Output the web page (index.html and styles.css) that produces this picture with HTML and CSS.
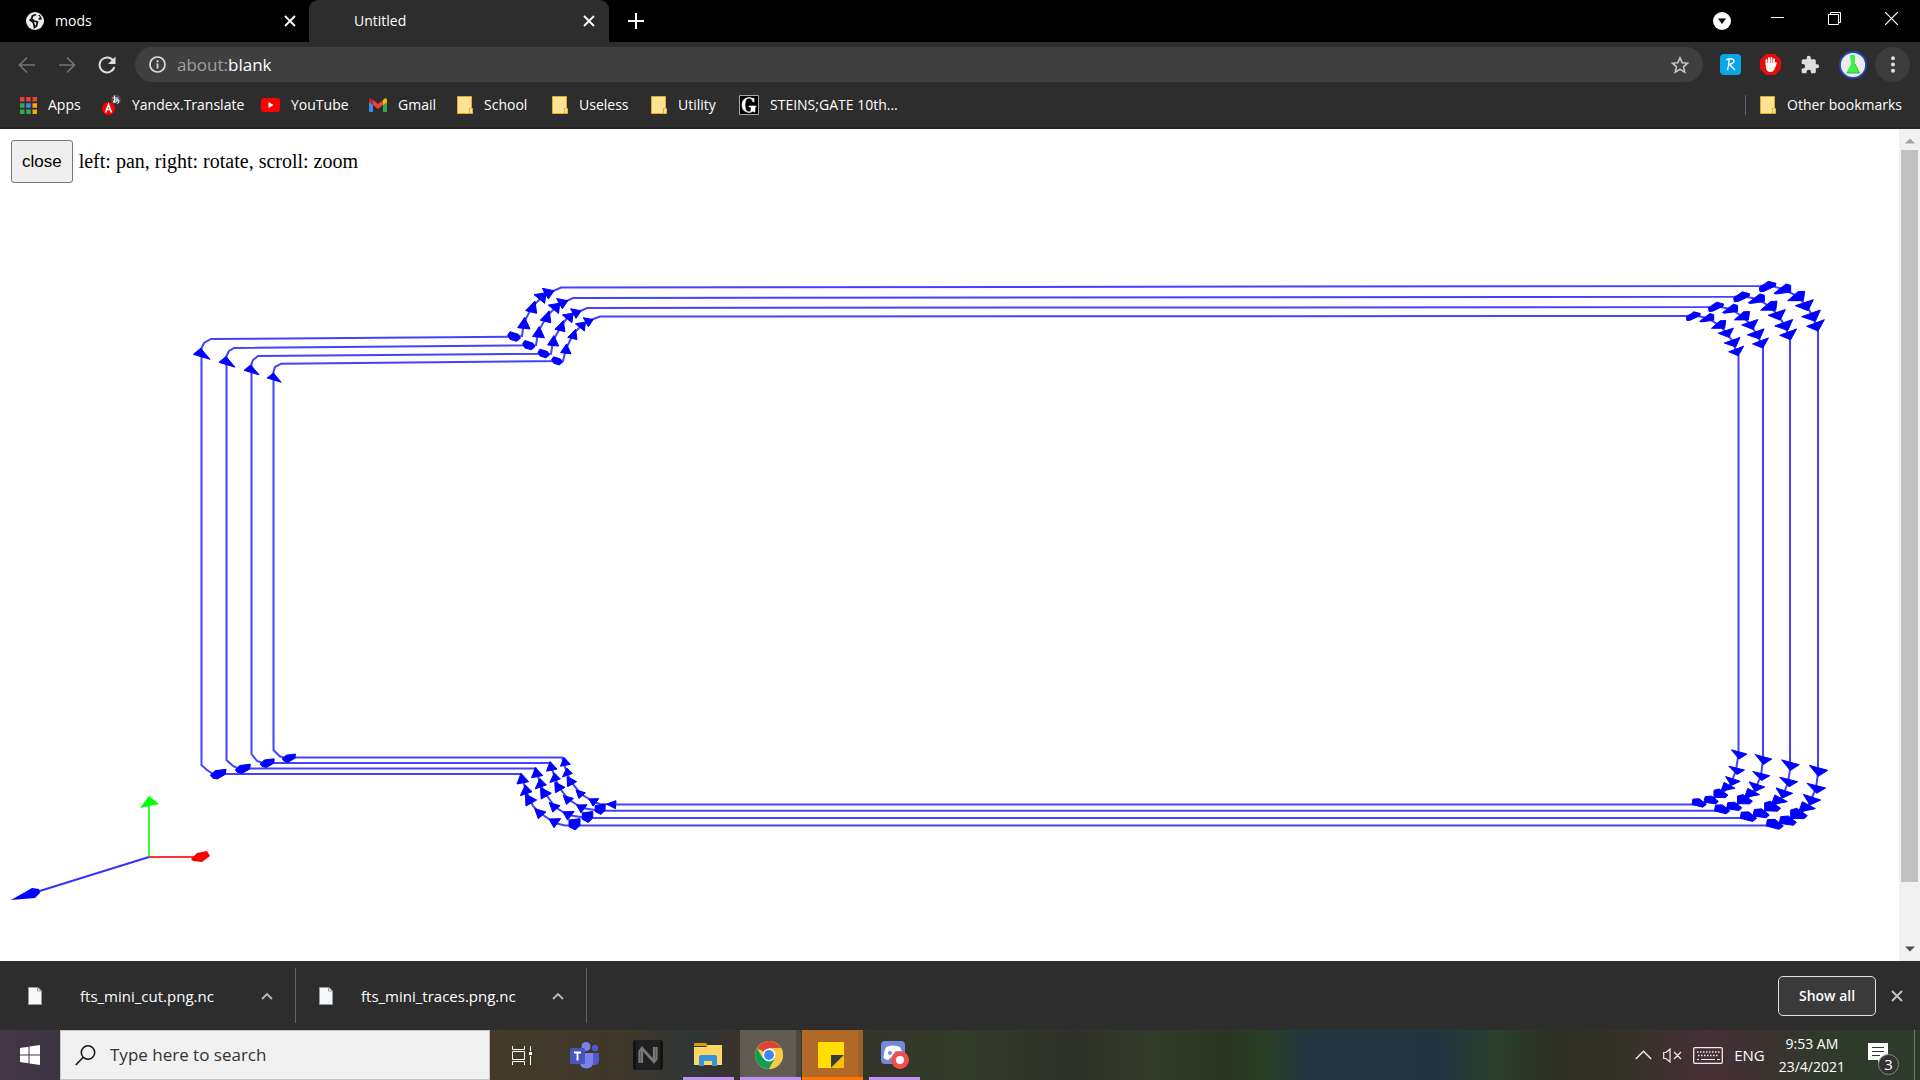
FILE: index.html
```html
<!DOCTYPE html>
<html lang="en">
<head>
<meta charset="utf-8">
<title>Untitled</title>
<link rel="stylesheet" href="styles.css">
</head>
<body>
<header class="browser">
  <div class="tabstrip">
    <div class="tab">
      <svg class="tab-icon" width="18" height="18" viewBox="0 0 18 18"><circle cx="9" cy="9" r="9" fill="#eee"/><path d="M10 2.500L6.500 4l-1 3 2.500 2 3.500 1-1 4-2 1.500-.5-3-1-2.500-3.500-2.500" fill="none" stroke="#111" stroke-width="1.800"/><path d="M12 3l2 2-2 2 2 1 2-1-2-4z" fill="#111"/></svg>
      <span class="tab-title">mods</span>
      <button class="icon-btn" aria-label="Close tab"><svg width="12" height="12" viewBox="0 0 12 12"><path d="M1 1l10 10M11 1L1 11" stroke="#fff" stroke-width="1.800"/></svg></button>
    </div>
    <div class="tab active">
      <span class="tab-title">Untitled</span>
      <button class="icon-btn" aria-label="Close tab"><svg width="12" height="12" viewBox="0 0 12 12"><path d="M1 1l10 10M11 1L1 11" stroke="#fff" stroke-width="1.800"/></svg></button>
    </div>
    <button class="icon-btn new-tab" aria-label="New tab"><svg width="16" height="16" viewBox="0 0 16 16"><path d="M8 0v16M0 8h16" stroke="#fff" stroke-width="2"/></svg></button>
    <div class="window-controls">
      <button class="icon-btn" aria-label="Search tabs"><svg class="lower" width="18" height="18" viewBox="0 0 18 18"><circle cx="9" cy="9" r="9" fill="#fff"/><path d="M5 6.500h8L9 12z" fill="#000"/></svg></button>
      <button class="icon-btn" aria-label="Minimize"><svg width="13" height="13" viewBox="0 0 13 13"><path d="M0 5.500h13" stroke="#fff"/></svg></button>
      <button class="icon-btn" aria-label="Restore"><svg width="13" height="13" viewBox="0 0 13 13"><path d="M.5 2.500h10v10H.5zM2.500 2V.5h10v10h-2" fill="none" stroke="#fff"/></svg></button>
      <button class="icon-btn" aria-label="Close"><svg width="13" height="13" viewBox="0 0 13 13"><path d="M0 0l13 13M13 0L0 13" stroke="#fff" stroke-width="1.200"/></svg></button>
    </div>
  </div>
  <div class="toolbar">
    <div class="nav">
      <button class="icon-btn" aria-label="Back"><svg width="18" height="18" viewBox="0 0 18 18"><path d="M17 9H2M9 1.500L1.500 9 9 16.500" fill="none" stroke="#747474" stroke-width="1.700"/></svg></button>
      <button class="icon-btn" aria-label="Forward"><svg width="18" height="18" viewBox="0 0 18 18"><path d="M1 9h15M9 1.500L16.500 9 9 16.500" fill="none" stroke="#747474" stroke-width="1.700"/></svg></button>
      <button class="icon-btn" aria-label="Reload"><svg width="18" height="18" viewBox="0 0 18 18"><path d="M15.500 5A7.500 7.500 0 1 0 16.300 11" fill="none" stroke="#dedede" stroke-width="2"/><path d="M17.500.5v7.500H10z" fill="#dedede"/></svg></button>
    </div>
    <div class="omnibox">
      <svg width="17" height="17" viewBox="0 0 17 17"><circle cx="8.500" cy="8.500" r="7.500" fill="none" stroke="#dedede" stroke-width="1.700"/><path d="M8.500 7.500v5M8.500 4.200v2" stroke="#dedede" stroke-width="1.800"/></svg>
      <span class="url"><span class="scheme">about:</span>blank</span>
      <button class="icon-btn star" aria-label="Bookmark this tab"><svg width="18" height="18" viewBox="0 0 18 18"><path d="M9 1.800l2.200 4.900 5.300.5-4 3.600 1.200 5.300L9 13.300l-4.700 2.800 1.200-5.300-4-3.600 5.300-.5z" fill="none" stroke="#c4c4c4" stroke-width="1.600"/></svg></button>
    </div>
    <div class="extensions">
      <button class="icon-btn" aria-label="Raindrop"><svg width="21" height="21" viewBox="0 0 21 21"><rect width="21" height="21" rx="4" fill="#0aa5e8"/><path d="M6 6c4-2 8-1.500 8 1s-4 3.500-5.500 3.500c2 .5 4 3 6.500 5.500M9 5.500c0 4-.5 7-1.500 10.500" fill="none" stroke="#fff" stroke-width="1.300"/></svg></button>
      <button class="icon-btn" aria-label="Ad blocker"><svg width="21" height="21" viewBox="0 0 21 21"><path d="M6 0h9l6 6v9l-6 6H6l-6-6V6z" fill="#e60c0c"/><path d="M6.500 10V6M9 9V4M11.500 9V4M14 10V5.500" stroke="#fff" stroke-width="1.900" stroke-linecap="round"/><path d="M5.600 9h9.300l1-1 1 1-2.500 6.500Q13 18 10 18t-4-4z" fill="#fff"/></svg></button>
      <button class="icon-btn" aria-label="Extensions"><svg width="20" height="20" viewBox="0 0 24 24"><path fill="#dedede" d="M20.500 11H19V7c0-1.100-.9-2-2-2h-4V3.500a2.500 2.500 0 0 0-5 0V5H4c-1.100 0-2 .9-2 2v3.800h1.500a2.700 2.700 0 0 1 0 5.400H2V20c0 1.100.9 2 2 2h3.800v-1.500a2.700 2.700 0 0 1 5.400 0V22H17c1.100 0 2-.9 2-2v-4h1.500a2.500 2.500 0 0 0 0-5z"/></svg></button>
      <button class="icon-btn" aria-label="Profile"><svg width="28" height="28" viewBox="0 0 28 28"><circle cx="14" cy="14" r="13" fill="#ececec" stroke="#2747c4" stroke-width="1.800"/><path d="M11 4h5v9l4.500 9h-13L12 13z" fill="#3df04a"/><path d="M16 13l4.500 9h-13" fill="none" stroke="#25c93a"/></svg></button>
      <button class="icon-btn menu" aria-label="Menu"><svg width="4" height="17" viewBox="0 0 4 17"><g fill="#dedede"><circle cx="2" cy="2.200" r="2"/><circle cx="2" cy="8.500" r="2"/><circle cx="2" cy="14.800" r="2"/></g></svg></button>
    </div>
  </div>
  <nav class="bookmarks" aria-label="Bookmarks">
    <a href="#"><svg width="17" height="17" viewBox="0 0 17 17"><path d="M0 0h4.500v4.500H0zM6.200 0h4.500v4.500H6.200zM12.500 0H17v4.500h-4.500z" fill="#ea4335"/><path d="M0 6.200h4.500v4.500H0zM0 12.500h4.500V17H0zM6.200 12.500h4.500V17H6.200z" fill="#34a853"/><path d="M6.200 6.200h4.500v4.500H6.200z" fill="#4285f4"/><path d="M12.500 6.200H17v4.500h-4.500zM12.500 12.500H17V17h-4.500z" fill="#fbab05"/></svg><span class="w-apps">Apps</span></a>
    <a href="#"><svg width="19" height="23" viewBox="0 0 19 23"><circle cx="14" cy="5.500" r="5" fill="#444"/><path d="M10.500 4h6M12.500 1.500v7M15.500 5.500q-4 0-4 2.500 3 1 4-2.500 3 1 0 4" fill="none" stroke="#eee" stroke-width="1.100"/><circle cx="6.500" cy="14.500" r="6.500" fill="#f00"/><path d="M3.500 18.500l3-8 3 8M4.500 15.500h4" fill="none" stroke="#fff" stroke-width="1.500"/></svg><span class="w-yandex">Yandex.Translate</span></a>
    <a href="#"><svg width="19" height="14" viewBox="0 0 19 14"><rect width="19" height="14" rx="3" fill="#f00"/><path d="M7.500 4l5 3-5 3z" fill="#fff"/></svg><span class="w-youtube">YouTube</span></a>
    <a href="#"><svg width="18" height="14" viewBox="0 0 18 14"><path d="M0 2v11q0 1 1 1h3V5z" fill="#4285f4"/><path d="M18 2v11q0 1-1 1h-3V5z" fill="#34a853"/><path d="M0 2q0-2 2-1.800L4 2v5L0 4z" fill="#c5221f"/><path d="M18 2q0-2-2-1.800L14 2v5l4-3z" fill="#fbbc04"/><path d="M4 2l5 4 5-4v5l-5 4-5-4z" fill="#ea4335"/></svg><span class="w-gmail">Gmail</span></a>
    <a href="#"><svg width="16" height="18" viewBox="0 0 16 18"><path d="M.5.5h14v11l1 1v5H.5z" fill="#ffe394" stroke="#d8ae35"/><path d="M12.500 17.500v-5h2" fill="none" stroke="#d8ae35"/></svg><span class="w-school">School</span></a>
    <a href="#"><svg width="16" height="18" viewBox="0 0 16 18"><path d="M.5.5h14v11l1 1v5H.5z" fill="#ffe394" stroke="#d8ae35"/><path d="M12.500 17.500v-5h2" fill="none" stroke="#d8ae35"/></svg><span class="w-useless">Useless</span></a>
    <a href="#"><svg width="16" height="18" viewBox="0 0 16 18"><path d="M.5.5h14v11l1 1v5H.5z" fill="#ffe394" stroke="#d8ae35"/><path d="M12.500 17.500v-5h2" fill="none" stroke="#d8ae35"/></svg><span class="w-utility">Utility</span></a>
    <a href="#"><svg width="20" height="20" viewBox="0 0 20 20"><path d="M.5.5h19v19H.5z" fill="#000" stroke="#aaa"/><path d="M15 3v4h-1q-1-4-4-4-4 0-4 7t4 7q2 0 2-2v-3h-2v-1h7v1h-1v5h-1l-1-1q-2 1.500-4 1.500-7-.5-7-7.500T10 2.500q2 0 4 1z" fill="#fff" stroke="#fff" stroke-width=".6"/></svg><span>STEINS;GATE 10th...</span></a>
    <a class="other" href="#"><svg width="16" height="18" viewBox="0 0 16 18"><path d="M.5.5h14v11l1 1v5H.5z" fill="#ffe394" stroke="#d8ae35"/><path d="M12.500 17.500v-5h2" fill="none" stroke="#d8ae35"/></svg><span>Other bookmarks</span></a>
  </nav>
</header>

<main class="page">
  <div class="view">
    <div class="hint"><button class="close-btn">close</button><span>left: pan, right: rotate, scroll: zoom</span></div>
    <svg class="toolpath" viewBox="0 129 1899 832" preserveAspectRatio="xMidYMid meet" role="img" aria-label="Toolpath">
      <g fill="none" stroke="#00f" stroke-opacity=".74" stroke-width="2">
        <path d="M201.500 765V348L204 343L211 339L514 336.700L522 336L523.700 323L532 307L541 298L549 293L561 287.500L1760 286L1768 285L1783 289L1797 296L1806 305L1812 315L1816 325L1818 331V766L1818 773L1816 788L1811 800L1807 808L1799 814L1788 821L1775 825.500H574L565 825.500L555 823L540 813L533 806L526 791L521 774H213L207 770Z"/>
        <path d="M226.500 760V356L229 351L234 348L536 345.300L538 332L547 316L555 308L562 303L573 298L1734 296.700L1742 296L1757 299L1769 306L1777 314L1784 324L1788 334L1790 340V770L1788 782L1784 793L1779 801L1772 807L1761 813L1749 818H587L568 815L555 807L545 793L540 784L536 768.500H238L233 766Z"/>
        <path d="M251.500 754V364L253 360L258 356L551 353.700L553 341L561 326L568 317L576 313L587 308L1710 307L1716 306L1730 309L1742 316L1750 324L1756 333L1761 343L1763 348V759L1761 776L1756 787L1752 794L1745 800L1734 806L1722 810.700H600L582 808L568 799L559 787L555 778L550 763H263L257 761Z"/>
        <path d="M273.500 750V372L275 367L281 363.700L563 361L566 349L573 334L581 326L588 321L600 316.500L1687 316L1693 315L1707 318L1719 325L1726 332L1733 342L1736 351L1738.500 356V754L1736 770L1732 781L1728 788L1721 794L1711 800L1699 804.500H612L600 804L594 802L581 794L571 782L567 773L562 757.500H284L280 756.500Z"/>
      </g>
      <g id="heads" fill="#00f" stroke="#00f" stroke-width="1"></g>
      <g fill="none" stroke-width="2" stroke-opacity=".8"><path d="M149 857L30 894" stroke="#00f"/><path d="M149 857V800" stroke="#0f0"/><path d="M149 857H196" stroke="#f00"/></g>
      <path d="M11 900L32 888L39 889L40 893L35 898Z" fill="#00f"/>
      <path d="M140 808L149 796L159 804Z" fill="#0f0"/>
      <path d="M191 859L197 853L207 851L210 856L202 862L193 861Z" fill="#f00"/>
    </svg>
  </div>
  <div class="scrollbar">
    <svg width="10" height="6" viewBox="0 0 10 6"><path d="M0 5.500h10L5 .5z" fill="#a3a3a3"/></svg>
    <div class="thumb"></div>
    <svg width="10" height="6" viewBox="0 0 10 6"><path d="M0 .5h10L5 5.500z" fill="#505050"/></svg>
  </div>
</main>

<section class="downloads" aria-label="Downloads">
  <div class="download">
    <svg width="14" height="18" viewBox="0 0 14 18"><path d="M.5.500h9.500l3.500 3.500v13.500H.5z" fill="#f6f9fb" stroke="#999"/><path d="M9.500.5V4h4" fill="none" stroke="#999"/></svg>
    <span class="file">fts_mini_cut.png.nc</span>
    <button class="icon-btn" aria-label="More options"><svg width="12" height="8" viewBox="0 0 12 8"><path d="M1 7l5-5 5 5" fill="none" stroke="#bbb" stroke-width="1.800"/></svg></button>
  </div>
  <div class="download">
    <svg width="14" height="18" viewBox="0 0 14 18"><path d="M.5.500h9.500l3.500 3.500v13.500H.5z" fill="#f6f9fb" stroke="#999"/><path d="M9.500.5V4h4" fill="none" stroke="#999"/></svg>
    <span class="file">fts_mini_traces.png.nc</span>
    <button class="icon-btn" aria-label="More options"><svg width="12" height="8" viewBox="0 0 12 8"><path d="M1 7l5-5 5 5" fill="none" stroke="#bbb" stroke-width="1.800"/></svg></button>
  </div>
  <button class="show-all">Show all</button>
  <button class="icon-btn" aria-label="Close downloads"><svg width="12" height="12" viewBox="0 0 12 12"><path d="M1 1l10 10M11 1L1 11" stroke="#c4c4c4" stroke-width="1.900"/></svg></button>
</section>

<footer class="taskbar">
  <button class="icon-btn start" aria-label="Start"><svg width="20" height="20" viewBox="0 0 20 20"><path d="M0 3l8.500-1.300v7.800H0zM9.500 1.500L20 0v9.500H9.500zM0 10.500h8.500v7.800L0 17zM9.500 10.500H20V20L9.500 18.500z" fill="#fff"/></svg></button>
  <label class="search">
    <svg width="21" height="21" viewBox="0 0 21 21"><circle cx="13" cy="7.500" r="6.700" fill="none" stroke="#111" stroke-width="1.500"/><path d="M8.200 12.200L.8 20" stroke="#111" stroke-width="1.500"/></svg>
    <input type="text" placeholder="Type here to search" aria-label="Type here to search">
  </label>
  <button class="app" aria-label="Task View"><svg width="20" height="19" viewBox="0 0 20 19"><path d="M.5 0v3.500h12V0M.5 19v-3.500h12V19M.5 5.500h12v8H.5zM18.500 0v5M18.500 10v9" fill="none" stroke="#fff"/><path d="M17 6h3v3h-3z" fill="#fff"/></svg></button>
  <button class="app" aria-label="Teams"><svg width="29" height="27" viewBox="0 0 29 27"><circle cx="25" cy="6" r="3.200" fill="#5059c9"/><path d="M20 11h9v8q0 4-5 4h-4z" fill="#5059c9"/><circle cx="16" cy="4.500" r="4.500" fill="#7b83eb"/><path d="M10 11h13v9q0 6.500-6.500 6.500T10 20z" fill="#7b83eb"/><rect y="6" width="15" height="16" rx="1.500" fill="#4b53bc"/><path d="M4 10.500h7M7.500 10.500v8" stroke="#fff" stroke-width="1.900"/></svg></button>
  <button class="app" aria-label="NZXT"><svg width="30" height="30" viewBox="0 0 30 30"><rect width="30" height="30" rx="3" fill="#111"/><rect x="3" width="24" height="30" fill="#1f1f1f"/><path d="M6.500 23V11L9 8l12 13V7M23.500 7v12L21 22 9 9v14" fill="none" stroke="#777" stroke-width="2.200"/></svg></button>
  <button class="app open stacked" aria-label="File Explorer"><svg width="28" height="24" viewBox="0 0 28 24"><path d="M0 1q0-1 1-1h11l2 3H0z" fill="#e09b0c"/><path d="M0 4h12l2-2h14v20H0z" fill="#ffd766"/><path d="M5 23V14q0-2 2-2h14q2 0 2 2v9h-5v-5h-8v5z" fill="#3793dd"/></svg></button>
  <button class="app open stacked current" aria-label="Chrome"><svg width="28" height="28" viewBox="0 0 28 28"><circle cx="14" cy="14" r="14" fill="#fcca3f"/><path d="M14 14L1.900 7A14 14 0 0 1 26.100 7H14z" fill="#db4437"/><path d="M1.900 7A14 14 0 0 0 14 28l6-10.500L14 14l-6 3.500z" fill="#0f9d58"/><path d="M20 17.500L14 28A14 14 0 0 0 26.100 7H14z" fill="#fcca3f"/><circle cx="14" cy="14" r="6.500" fill="#fff"/><circle cx="14" cy="14" r="5" fill="#4285f4"/></svg></button>
  <button class="app open stacked alert" aria-label="Sticky Notes"><svg width="26" height="26" viewBox="0 0 26 26"><path d="M1 0h24q1 0 1 1v12L13 26H1q-1 0-1-1V1q0-1 1-1z" fill="#ffde00"/><path d="M13 26V13h13z" fill="#3b3a39"/><path d="M13 26L26 13v12q0 1-1 1z" fill="#f5c400"/></svg></button>
  <button class="app open" aria-label="Discord"><svg width="28" height="28" viewBox="0 0 28 28"><rect width="24" height="23" rx="4" fill="#7289da"/><path d="M5 6q7-3 14 0 3 5 2.500 11-3 2-5 2l-1-2h-7l-1 2q-2.500 0-5-2Q2.500 11 5 6z" fill="#fff"/><circle cx="9" cy="12" r="2" fill="#7289da"/><circle cx="15.500" cy="12" r="2" fill="#7289da"/><circle cx="19" cy="19" r="9" fill="#f04f50"/><circle cx="19" cy="19" r="4" fill="#fff"/></svg></button>
  <div class="tray">
    <svg width="17" height="10" viewBox="0 0 17 10"><path d="M.8 9l7.700-7.700L16.200 9" fill="none" stroke="#eee" stroke-width="1.400"/></svg>
    <svg width="19" height="15" viewBox="0 0 19 15"><path d="M.7 4.500H3L7 1v13l-4-3.500H.7zM11 4l7 7M18 4l-7 7" fill="none" stroke="#eee" stroke-width="1.200"/></svg>
    <svg width="30" height="17" viewBox="0 0 30 17"><rect x=".7" y=".7" width="28.600" height="15.600" rx="1" fill="none" stroke="#eee" stroke-width="1.300"/><path d="M4 5h23M5 8.500h21" stroke="#eee" stroke-width="1.400" stroke-dasharray="1.500 1.500"/><path d="M4 12.500h2M8 12.500h14M24 12.500h3" stroke="#eee"/></svg>
    <span>ENG</span>
    <div class="clock"><span>9:53 AM</span><span>23/4/2021</span></div>
    <div class="notify"><svg width="20" height="20" viewBox="0 0 20 20"><path d="M0 0h20v17h-6l-4 3v-3H0z" fill="#fff"/><path d="M4 4.500h12M4 8.500h12M4 12.500h8" stroke="#333" stroke-width="1.200"/></svg><span class="badge">3</span></div>
  </div>
</footer>
<script src="heads.js"></script>
</body>
</html>
```

FILE: styles.css
```css
* { box-sizing: border-box; }
body {
  margin: 0;
  min-height: 100vh;
  display: flex;
  flex-direction: column;
  font: 14px/20px "Open Sans", "Noto Sans", sans-serif;
  color: #fff;
  background: #fff;
}
svg { display: block; flex: none; }
button { font: inherit; color: inherit; }
.icon-btn {
  display: flex;
  align-items: center;
  justify-content: center;
  padding: 0;
  border: 0;
  background: none;
}

.browser { background: #2d2d2d; border-bottom: 2px solid #232323; }
.tabstrip { display: flex; height: 42px; background: #000; }
.tab { display: flex; align-items: center; width: 309px; padding: 0 13px 0 26px; }
.tab-icon { margin-right: 11px; }
.tab-title { flex: 1; }
.tab.active { width: 300px; padding: 0 14px 0 45px; background: #2d2d2d; border-radius: 9px 9px 0 0; }
.new-tab { margin-left: 19px; }
.window-controls { display: flex; align-items: center; margin-left: auto; padding-bottom: 5px; }
.window-controls .icon-btn { width: 57px; }
.window-controls .icon-btn:first-child { width: 54px; padding-top: 5px; }

.toolbar { display: flex; align-items: center; height: 45px; padding-right: 10px; }
.nav { display: flex; gap: 22px; padding: 0 19px 0 18px; }
.omnibox {
  flex: 1;
  display: flex;
  align-items: center;
  gap: 11px;
  height: 35px;
  padding: 0 14px;
  border-radius: 18px;
  background: #3f3f3f;
  font-size: 17px;
}
.url { flex: 1; padding-left: 0; }
.scheme { color: #9aa0a6; }
.extensions { display: flex; align-items: center; gap: 19px; padding-left: 17px; }
.extensions .menu { width: 35px; height: 35px; border-radius: 50%; background: #3c3c3c; margin-left: -11px; }

.bookmarks { display: flex; align-items: center; height: 40px; padding: 0 18px 4px 20px; gap: 21px; }
.bookmarks a { display: flex; align-items: center; gap: 11px; color: #fff; text-decoration: none; white-space: nowrap; }
.w-apps { width: 33px; }
.w-yandex { width: 108px; }
.w-youtube { width: 57px; }
.w-gmail { width: 38px; }
.w-school { width: 47px; }
.w-useless { width: 51px; }
.w-utility { width: 40px; }
.bookmarks .other { margin-left: auto; padding-left: 14px; border-left: 1px solid #666; }

.page { flex: 1; display: flex; background: #fff; }
.view { flex: 1; display: grid; }
.view > * { grid-area: 1 / 1; }
.hint {
  display: flex;
  align-items: center;
  align-self: start;
  gap: 6px;
  padding: 11px;
  color: #000;
  font: 20px/24px "Liberation Serif", serif;
}
.hint span { padding-bottom: 2px; }
.close-btn {
  padding: 0 10px;
  height: 43px;
  border: 1px solid #767676;
  border-radius: 3px;
  background: #efefef;
  color: #000;
  font: 17px/20px "Liberation Sans", sans-serif;
}
.toolpath { width: 100%; height: auto; }
.scrollbar {
  width: 21px;
  display: flex;
  flex-direction: column;
  align-items: center;
  padding: 9px 0;
  background: #f1f1f1;
}
.thumb { width: 17px; flex: 1; margin: 6px 0 64px; background: #c1c1c1; }

.downloads { display: flex; align-items: center; height: 69px; padding-right: 17px; background: #2d2d2d; }
.download {
  display: flex;
  align-items: center;
  height: 55px;
  width: 291px;
  padding: 0 22px 0 23px;
  border-right: 1px solid #666;
}
.download:first-child { width: 296px; padding-left: 28px; }
.file { flex: 1; padding-left: 38px; font-size: 15px; }
.download + .download .file { padding-left: 28px; }
.show-all {
  width: 98px;
  height: 40px;
  margin: 0 15px 0 auto;
  border: 1px solid #dedede;
  border-radius: 5px;
  background: #3a3a3a;
  font-weight: 600;
}

.taskbar {
  display: flex;
  height: 50px;
  background: linear-gradient(90deg, #443647 0, #3b3441 3%, #453a28 25%, #3d372a 33%, #303638 36%, #3b3128 39%, #343428 44%, #333b2a 50%, #2f3229 56%, #333b2a 60%, #2c3524 64%, #294026 66%, #243640 68%, #233540 75%, #2a402e 78%, #2e2f24 81%, #363228 85%, #3f3032 87%, #472f36 89%, #3b3230 92%, #2f3a2a 95%, #2f3c2c 100%);
}
.start { width: 60px; }
.search {
  display: flex;
  align-items: center;
  gap: 14px;
  width: 430px;
  padding-left: 14px;
  border: 1px solid #c6c6c6;
  background: #f1f1f1;
}
.search input { flex: 1; min-width: 0; border: 0; padding: 0; background: none; font: 17px/24px "Open Sans", sans-serif; outline: 0; }
.search input::placeholder { color: #333; opacity: 1; }
.app {
  display: flex;
  align-items: center;
  justify-content: center;
  width: 51px;
  margin: 0 6px;
  padding: 0;
  border: 0;
  background: none;
}
.app.open { border-bottom: 3px solid #bf90f5; padding-top: 3px; }
.app.stacked { margin-left: 4px; padding-right: 2px; }
.app.current { width: 61px; padding-right: 4px; margin: 0 1px 0 0; background: linear-gradient(90deg, #605c52 56px, #4b483f 56px); }
.app.alert { width: 61px; padding-right: 4px; margin: 0; border-color: #ff7500; background: linear-gradient(90deg, #b16828 56px, #a0602a 56px); }
.tray { display: flex; align-items: center; margin-left: auto; padding-right: 5px; gap: 11px; font-size: 15px; }
.clock { display: flex; flex-direction: column; align-items: center; padding-left: 3px; font-size: 14px; line-height: 23px; }
.notify { position: relative; padding: 0 26px 4px 12px; border-right: 1px solid #777; height: 50px; display: flex; align-items: center; }
.badge {
  position: absolute;
  right: 15px;
  bottom: 5px;
  width: 21px;
  height: 21px;
  border: 1px solid #888;
  border-radius: 50%;
  background: #333;
  text-align: center;
  line-height: 19px;
}
```

FILE: heads.js
```js
// Direction heads of the four offset passes, drawn at three times page scale.
// Each shape is outlined once round its first centre, then repeated on each pass.
const corners = [
  { x: 180, y: 260, shapes: [
    ["40,283 62,265 90,298", [[62,283],[138,307],[212,331],[280,354]]],
    ["983,225 990,215 1015,223 1021,235 1010,244 990,238", [[1002,230],[1046,256],[1091,281],[1131,303]]],
    ["1013,203 1034,172 1050,207", [[1031,190],[1075,217],[1119,243],[1157,267]]],
    ["1037,152 1065,123 1070,160", [[1057,140],[1100,169],[1143,197],[1180,222]]],
    ["1062,104 1098,98 1094,130", [[1082,112],[1124,143],[1165,172],[1203,198]]],
    ["1087,85 1122,92 1105,117", [[1105,98],[1147,128],[1188,158],[1225,184]]]
  ]},
  { x: 1660, y: 260, shapes: [
    ["298,83 325,64 348,70 346,78 312,94 300,95", [[323,79],[245,110],[168,140],[100,168]]],
    ["342,100 378,72 392,76 392,96 348,102", [[368,88],[290,117],[211,147],[141,174]]],
    ["383,122 414,95 434,94 430,122", [[410,109],[328,138],[247,168],[177,194]]],
    ["406,137 460,119 444,152", [[435,134],[352,163],[271,192],[199,217]]],
    ["425,170 481,150 466,184", [[455,165],[373,193],[289,220],[218,245]]],
    ["440,199 493,179 474,213", [[467,196],[385,223],[302,249],[229,273]]]
  ]},
  { x: 1660, y: 730, shapes: [
    ["448,106 503,121 475,139", [[475,122],[391,105],[310,88],[237,73]]],
    ["441,160 497,174 470,190", [[468,175],[385,156],[303,138],[229,121]]],
    ["430,193 482,210 450,225", [[454,209],[371,189],[289,170],[217,153]]],
    ["427,215 466,236 416,246", [[441,235],[358,214],[276,193],[204,174]]],
    ["392,240 410,235 442,257 432,266 392,265", [[416,253],[337,231],[254,210],[182,192]]],
    ["362,260 385,258 409,277 400,286 358,280", [[383,272],[303,250],[222,229],[153,210]]],
    ["322,269 345,268 370,288 357,298 319,288", [[345,283],[266,260],[187,238],[118,219]]]
  ]},
  { x: 180, y: 730, shapes: [
    ["91,136 105,122 138,118 136,133 112,147 98,144", [[115,131],[189,115],[262,98],[327,83]]],
    ["1011,162 1023,130 1046,155", [[1027,148],[1070,130],[1114,111],[1155,97]]],
    ["1021,197 1036,165 1056,185", [[1037,183],[1081,163],[1124,145],[1161,129]]],
    ["1036,192 1070,210 1038,228", [[1050,210],[1095,190],[1137,172],[1173,155]]],
    ["1064,236 1098,246 1075,266", [[1081,249],[1124,230],[1165,208],[1202,191]]],
    ["1107,267 1142,266 1122,293", [[1124,278],[1165,256],[1205,235],[1241,216]]],
    ["1167,270 1200,266 1200,286 1186,300 1167,290", [[1183,284],[1222,262],[1260,239]]],
    ["1280,222 1308,212 1306,236", [[1295,224]]]
  ]}
];

const layer = document.getElementById("heads");
const taper = [1, 0.96, 0.9, 0.84];
for (const corner of corners) {
  for (const [outline, centres] of corner.shapes) {
    const points = outline.split(" ").map(p => p.split(",").map(Number));
    const [ox, oy] = centres[0];
    centres.forEach(([cx, cy], pass) => {
      const head = document.createElementNS("http://www.w3.org/2000/svg", "polygon");
      head.setAttribute("points", points.map(([px, py]) => [
        corner.x + (cx + (px - ox) * taper[pass]) / 3,
        corner.y + (cy + (py - oy) * taper[pass]) / 3
      ].join(",")).join(" "));
      layer.appendChild(head);
    });
  }
}
```
